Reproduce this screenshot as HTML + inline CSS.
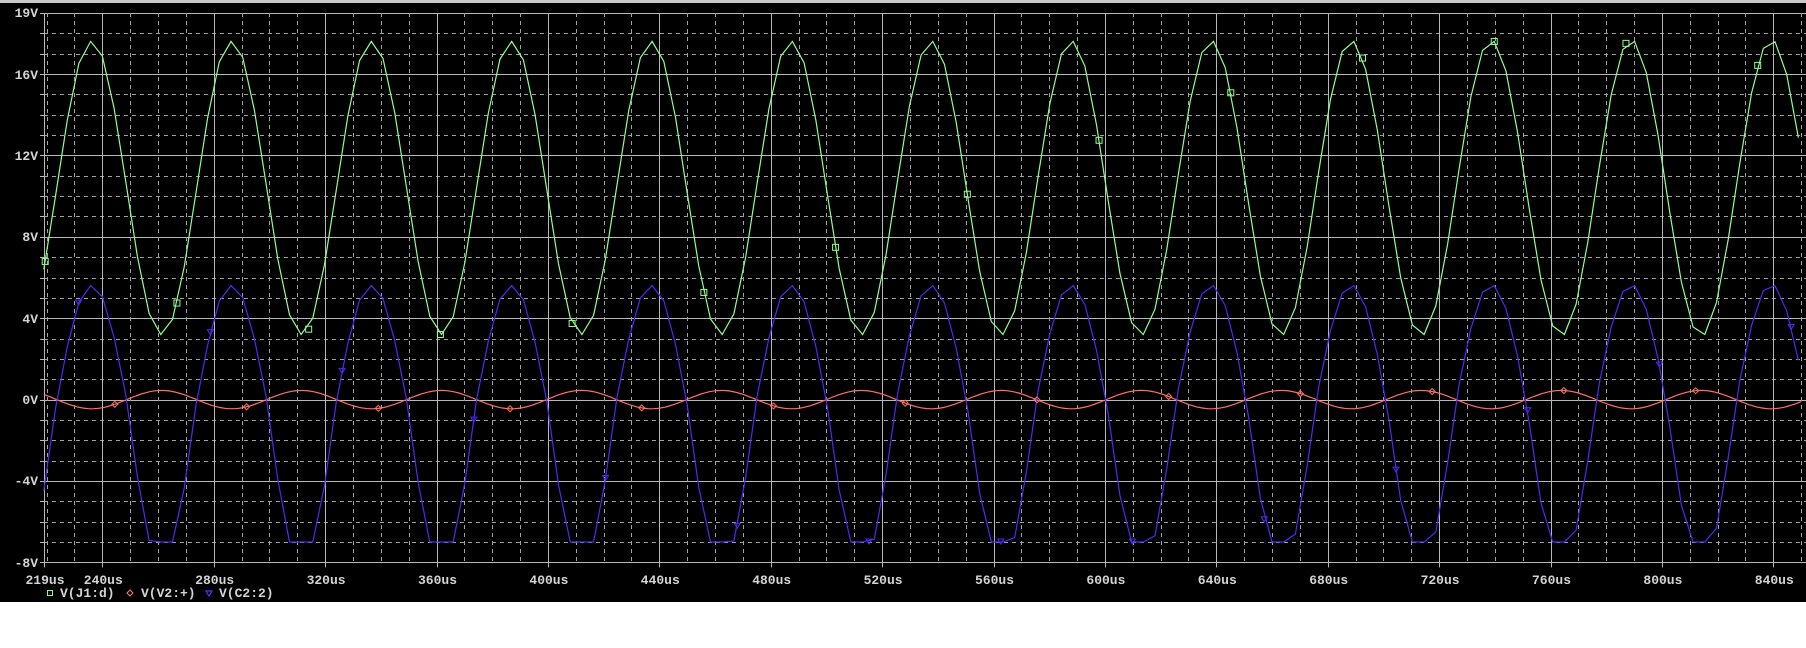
<!DOCTYPE html>
<html><head><meta charset="utf-8">
<style>
html,body{margin:0;padding:0;background:#fff;width:1806px;height:648px;overflow:hidden}
svg{display:block}
text{font-family:"Liberation Mono",monospace;font-weight:bold;font-size:13px;fill:#d4d4d4}
</style></head>
<body>
<svg id="s" width="1806" height="648" xmlns="http://www.w3.org/2000/svg">
<rect x="0" y="0" width="1806" height="602" fill="#000"/>
<rect x="0" y="0" width="1806" height="3" fill="#c8c8c8"/>
<g id="grid"></g>
<g id="waves"></g>
<g text-anchor="end">
<text x="38" y="17">19V</text>
<text x="38" y="79">16V</text>
<text x="38" y="160">12V</text>
<text x="38" y="241">8V</text>
<text x="38" y="323">4V</text>
<text x="38" y="404">0V</text>
<text x="38" y="485">-4V</text>
<text x="38" y="567">-8V</text>
</g>
<g id="xl" text-anchor="middle"></g>
<rect x="47.5" y="590.5" width="5" height="5" fill="none" stroke="#80ff80" stroke-width="1"/>
<text x="60" y="597">V(J1:d)</text>
<path d="M130 590 l3 3 l-3 3 l-3 -3z" fill="none" stroke="#ff8060" stroke-width="1"/>
<text x="141" y="597">V(V2:+)</text>
<path d="M206 591 l6 0 l-3 5z" fill="none" stroke="#5030ff" stroke-width="1.2"/>
<text x="219" y="597">V(C2:2)</text>
</svg>
<script>
var NS="http://www.w3.org/2000/svg";
function el(p,t,a){var e=document.createElementNS(NS,t);for(var k in a)e.setAttribute(k,a[k]);p.appendChild(e);return e;}
var g=document.getElementById('grid'),w=document.getElementById('waves'),xl=document.getElementById('xl');
function X(t){return 102.3+(t-240)*2.785;}
function Y(v){return 74+(16-v)*20.35;}
// horizontal
for(var v=-8;v<=19;v++){var y=Math.round(Y(v))+0.5;var solid=(v%4==0)||v==19;
el(g,'line',{x1:44,x2:1806,y1:y,y2:y,stroke:solid?'#b8b8b8':'#a0a0a0','stroke-width':1,'stroke-dasharray':solid?'':'4 4'});
el(g,'line',{x1:40,x2:44,y1:y,y2:y,stroke:'#b8b8b8'});}
// vertical
for(var t=220;t<=850;t+=10){var x=Math.round(X(t))+0.5;if(x>1806)break;var solid=(t%40==0);
el(g,'line',{x1:x,x2:x,y1:Y(19),y2:Y(-8),stroke:solid?'#b8b8b8':'#a0a0a0','stroke-width':1,'stroke-dasharray':solid?'':'4 4'});
if(solid)el(g,'line',{x1:x,x2:x,y1:Y(-8),y2:Y(-8)+5,stroke:'#b8b8b8'});}
el(g,'line',{x1:44.5,x2:44.5,y1:Y(19),y2:Y(-8)+5,stroke:'#b8b8b8'});
// x labels
el(xl,'text',{x:45,y:584}).textContent='219us';
for(var t=240;t<=840;t+=40){el(xl,'text',{x:X(t)+1,y:584}).textContent=t+'us';}
// waves
var P=50.25,t0=236.2;
function ph(t){return 2*Math.PI*(t-t0)/P;}
function gr(t){var c=Math.cos(ph(t));return 10.4+7.3*c;}
function bl(t){var c=Math.cos(ph(t));var v=c>0?5.7*c:8.2*c;return Math.max(-7,Math.min(5.6,v));}
function rd(t){return -0.45*Math.cos(ph(t));}
function path(f,col,step){var d='';for(var t=219;t<=850;t+=step){var x=X(t);if(x>1810)break;var v=f(t);
if(f===gr){v=Math.max(3.2,Math.min(17.6,v));}
d+=(d?'L':'M')+x.toFixed(1)+' '+Y(v).toFixed(1);}
el(w,'path',{d:d,fill:'none',stroke:col,'stroke-width':1.2});}
path(rd,'#ff7060',1);
path(bl,'#5028f0',4.2);
path(gr,'#90ff90',4.2);
// markers
for(var i=0;i<14;i++){var t=219.5+i*47.3;var x=X(t);
el(w,'rect',{x:x-3,y:Y(Math.max(3.2,Math.min(17.6,gr(t))))-3,width:6,height:6,fill:'none',stroke:'#90ff90'});
var t2=t+12;el(w,'path',{d:'M'+(X(t2)-3)+' '+(Y(bl(t2))-3)+'l6 0l-3 5z',fill:'none',stroke:'#5028f0'});
var t3=t+25;el(w,'path',{d:'M'+X(t3)+' '+(Y(rd(t3))-3)+'l3 3l-3 3l-3 -3z',fill:'none',stroke:'#ff7060'});}
</script>
</body></html>
